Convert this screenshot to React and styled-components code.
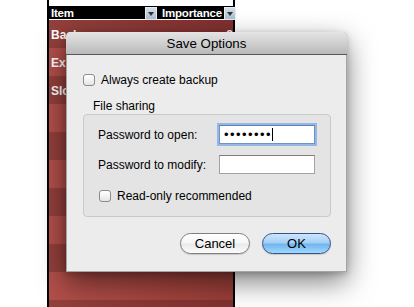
import React from 'react';
import styled, { createGlobalStyle } from 'styled-components';

const GlobalStyle = createGlobalStyle`
  html, body {
    margin: 0;
    padding: 0;
    background: #fff;
  }
  body {
    font-family: "Liberation Sans", Arial, sans-serif;
  }
`;

const Stage = styled.div`
  position: relative;
  width: 414px;
  height: 307px;
  overflow: hidden;
  background: #fff;
`;

const Table = styled.div`
  margin-left: 47px;
  width: 188px;
  height: 100%;
  padding-top: 6px;
  box-sizing: border-box;
  border-left: 2px solid #000;
  border-right: 2px solid #000;
  background: #fff;
`;

const HeaderRow = styled.div`
  display: grid;
  grid-template-columns: 109px 79px;
  height: 13px;
  background: #000;
  border-bottom: 1px solid #fff;
`;

const HeaderCell = styled.div`
  display: flex;
  align-items: center;
  justify-content: space-between;
  padding-left: ${p => p.$indent}px;
  padding-right: 1px;
  color: #fff;
  font-weight: bold;
  font-size: 11.5px;
  letter-spacing: -0.2px;
`;

const SortButton = styled.span`
  display: flex;
  align-items: center;
  justify-content: center;
  width: 10px;
  height: 11px;
  margin-top: 1px;
  background: linear-gradient(#d3deea, #aebfd1);
  border: 1px solid #e6edf5;

  &::after {
    content: '';
    border-left: 3.5px solid transparent;
    border-right: 3.5px solid transparent;
    border-top: 4px solid #333;
  }
`;

const Row = styled.div`
  display: grid;
  grid-template-columns: 109px 79px;
  height: 28px;
  align-items: center;
  padding-top: 2px;
  box-sizing: border-box;
  color: #fff;
  font-weight: bold;
  font-size: 12px;
  background: ${p => (p.$light
    ? 'linear-gradient(90deg, #b24f4a, #a4443e 60%, #983d38)'
    : 'linear-gradient(90deg, #93403b, #883633 60%, #803130)')};
`;

const Cell = styled.div`
  padding: 0 4px 0 2px;
  text-align: ${p => (p.$right ? 'right' : 'left')};
  white-space: nowrap;
  overflow: hidden;
`;

const Sheet = styled.div`
  position: absolute;
  left: 66px;
  top: 32px;
  width: 281px;
  height: 240px;
  box-sizing: border-box;
  display: flex;
  flex-direction: column;
  background: #ececec;
  border: 1px solid #a5a5a5;
  border-top: none;
  border-radius: 5px 5px 0 0;
  box-shadow: 0 10px 28px rgba(0, 0, 0, 0.5), 0 2px 6px rgba(0, 0, 0, 0.2);
  color: #000;
`;

const TitleBar = styled.div`
  height: 21px;
  margin: 0 -1px;
  display: flex;
  align-items: center;
  justify-content: center;
  border-radius: 5px 5px 0 0;
  border-bottom: 1px solid #575757;
  background: linear-gradient(#e4e4e4, #d0d0d0 50%, #b9b9b9);
  font-size: 13.3px;
  padding-top: 1px;
`;

const Body = styled.div`
  flex: 1;
  display: flex;
  flex-direction: column;
  padding: 18px 15px 0 16px;
`;

const CheckRow = styled.label`
  display: flex;
  align-items: center;
  gap: 6px;
  height: 14px;
  font-size: 12px;
  margin-left: ${p => p.$indent || 0}px;
`;

const Box = styled.span`
  width: 10px;
  height: 10px;
  border: 1px solid #8c8c8c;
  border-radius: 3px;
  background: linear-gradient(#ffffff, #f3f3f3 50%, #e3e3e3);
  box-shadow: inset 0 1px 1px rgba(255, 255, 255, 0.9);
`;

const GroupLabel = styled.div`
  margin: 12px 0 1px 10px;
  height: 14px;
  line-height: 14px;
  font-size: 12px;
`;

const Group = styled.div`
  height: 103px;
  box-sizing: border-box;
  padding: 10px 14px 0;
  border: 1px solid #c9c9c9;
  border-radius: 4px;
  background: #e4e4e4;
  display: flex;
  flex-direction: column;
`;

const Field = styled.div`
  display: grid;
  grid-template-columns: 121px 96px;
  align-items: center;
  height: 19px;
  margin-bottom: ${p => p.$gap}px;
  font-size: 12px;
`;

const Input = styled.div`
  height: 19px;
  box-sizing: border-box;
  display: flex;
  align-items: center;
  padding-left: 4px;
  background: #fff;
  border: 1px solid ${p => (p.$focused ? '#6f93c9' : '#a3a3a3')};
  border-top-color: ${p => (p.$focused ? '#5c82bd' : '#7d7d7d')};
  box-shadow: ${p => (p.$focused ? '0 0 0 2px #95b7e3' : 'none')};
`;

const Dots = styled.span`
  font-size: 13px;
  letter-spacing: 1.45px;
  line-height: 1;
`;

const Caret = styled.span`
  width: 1px;
  height: 13px;
  background: #000;
`;

const Buttons = styled.div`
  display: flex;
  justify-content: flex-end;
  gap: 12px;
  margin-top: 16px;
`;

const PushButton = styled.button`
  width: ${p => p.$w}px;
  height: 21px;
  padding: 0;
  border-radius: 11px;
  font-family: "Liberation Sans", Arial, sans-serif;
  font-size: 13px;
  color: #000;
  border: 1px solid ${p => (p.$primary ? '#34528c' : '#7f7f7f')};
  background: ${p => (p.$primary
    ? 'linear-gradient(#cde6fb, #a2cff6 48%, #6fb4f0 52%, #9fd8fb)'
    : 'linear-gradient(#ffffff, #f6f6f6 48%, #e9e9e9 52%, #fbfbfb)')};
  box-shadow: 0 1px 1px rgba(0, 0, 0, 0.15);
`;

const rows = [
  ['Backup', '8'],
  ['Export', '5'],
  ['Slow sync', '3'],
  ['', ''], ['', ''], ['', ''], ['', ''], ['', ''], ['', ''], ['', ''], ['', ''],
];

export default function App() {
  return (
    <Stage>
      <GlobalStyle />
      <Table>
        <HeaderRow>
          <HeaderCell $indent={2}>Item<SortButton /></HeaderCell>
          <HeaderCell $indent={4}>Importance<SortButton /></HeaderCell>
        </HeaderRow>
        {rows.map(([name, value], i) => (
          <Row key={i} $light={i % 2 === 1}>
            <Cell>{name}</Cell>
            <Cell $right>{value}</Cell>
          </Row>
        ))}
      </Table>

      <Sheet>
        <TitleBar>Save Options</TitleBar>
        <Body>
          <CheckRow><Box />Always create backup</CheckRow>
          <GroupLabel>File sharing</GroupLabel>
          <Group>
            <Field $gap={11}>
              <span>Password to open:</span>
              <Input $focused><Dots>••••••••</Dots><Caret /></Input>
            </Field>
            <Field $gap={15}>
              <span>Password to modify:</span>
              <Input />
            </Field>
            <CheckRow $indent={1}><Box />Read-only recommended</CheckRow>
          </Group>
          <Buttons>
            <PushButton $w={70}>Cancel</PushButton>
            <PushButton $w={69} $primary>OK</PushButton>
          </Buttons>
        </Body>
      </Sheet>
    </Stage>
  );
}
